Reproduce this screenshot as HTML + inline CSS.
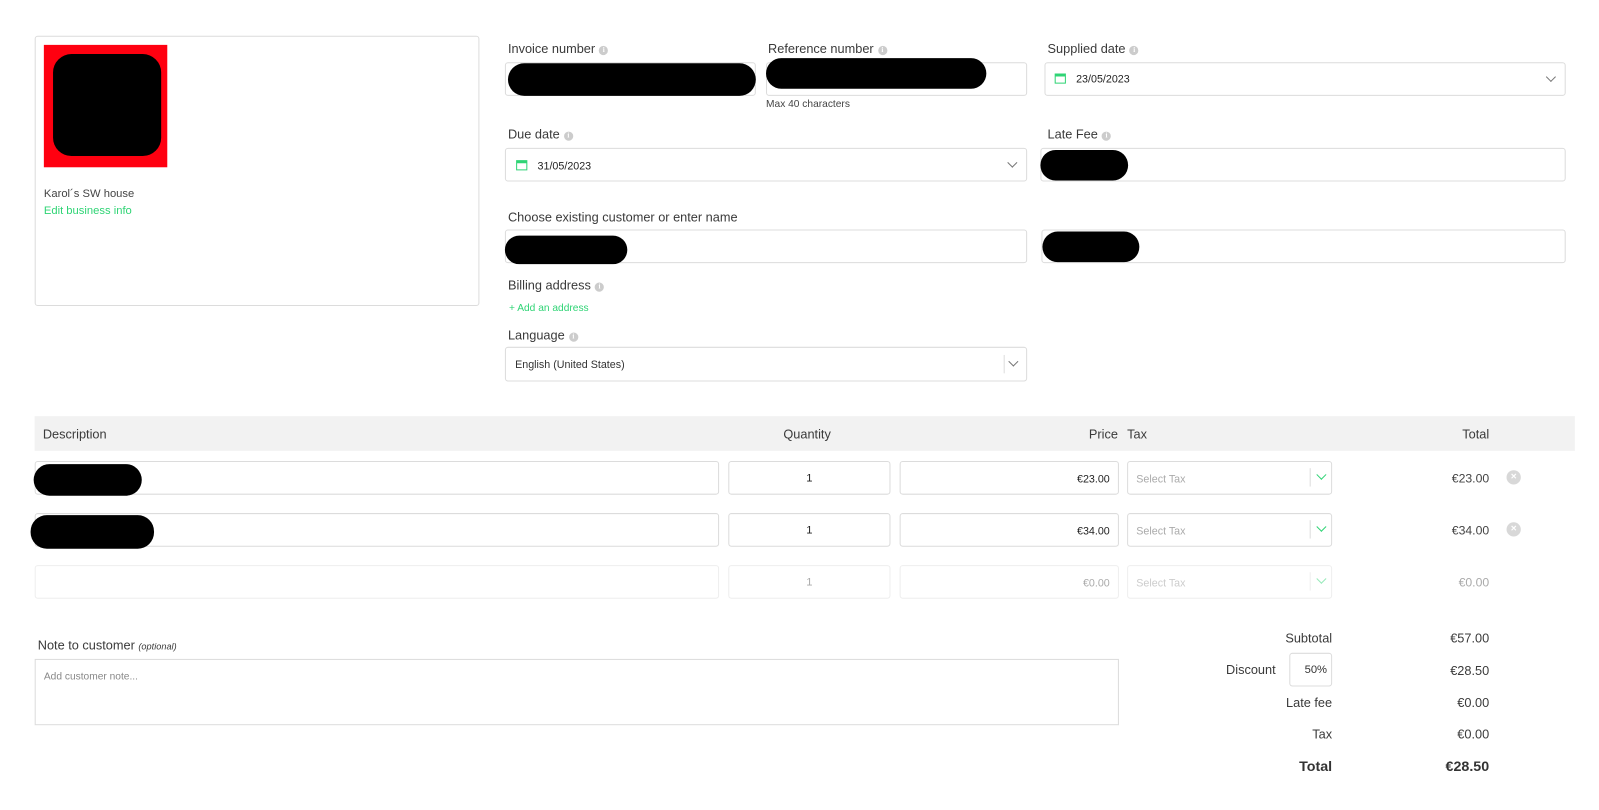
<!DOCTYPE html>
<html><head><meta charset="utf-8"><style>
html,body{margin:0;padding:0;background:#fff;overflow:hidden;width:1599px;height:810px}
#w{position:absolute;left:0;top:0;width:1568px;height:794px;transform:scale(1.02);transform-origin:0 0;font-family:"Liberation Sans",sans-serif;color:#444}
.a{position:absolute}
.box{position:absolute;border:1px solid #dcdcdc;border-radius:3px;background:#fff;box-sizing:border-box}
.lbl{position:absolute;font-size:12.5px;color:#3a3a3a;white-space:nowrap;margin-top:1px}
.i{display:inline-block;width:9px;height:9px;border-radius:50%;background:#ccc;color:#fff;font-size:7px;line-height:9px;text-align:center;font-weight:bold;vertical-align:1px;margin-left:4px;font-family:"Liberation Serif",serif}
.blk{position:absolute;background:#000;border-radius:16px}
.t{position:absolute;font-size:11px;white-space:nowrap;margin-top:1px}
.g{color:#2fd475}
.cal{position:absolute;width:11px;height:10px;border:1.5px solid #2fd475;border-top-width:3px;box-sizing:border-box}
.chev{position:absolute;width:6px;height:6px;border-right:1.3px solid #777;border-bottom:1.3px solid #777;transform:rotate(45deg)}
.gch{border-color:#2fd475}
.r{text-align:right}
.x{position:absolute;width:14px;height:14px;border-radius:50%;background:#d8d8d8;color:#fff;font-size:10px;line-height:14px;text-align:center;font-weight:bold}
.s{font-size:10.5px;margin-top:2px}
</style></head><body><div id="w">
<div class="box" style="left:34px;top:35px;width:436px;height:265px"></div>
<div class="a" style="left:43px;top:44px;width:121px;height:120px;background:#ff0010"></div>
<div class="blk" style="left:52px;top:53px;width:106px;height:100px;border-radius:18px"></div>
<div class="t" style="left:43px;top:183px;color:#444">Karol´s SW house</div>
<div class="t g" style="left:43px;top:200px">Edit business info</div>

<div class="lbl" style="left:498px;top:40px">Invoice number<span class="i">i</span></div>
<div class="box" style="left:495px;top:61px;width:246px;height:33px"></div>
<div class="blk" style="left:498px;top:62px;width:243px;height:32px"></div>
<div class="lbl" style="left:753px;top:40px">Reference number<span class="i">i</span></div>
<div class="box" style="left:751px;top:61px;width:256px;height:33px"></div>
<div class="blk" style="left:751px;top:57px;width:216px;height:30px"></div>
<div class="t" style="left:751px;top:96px;font-size:10px">Max 40 characters</div>
<div class="lbl" style="left:1027px;top:40px">Supplied date<span class="i">i</span></div>
<div class="box" style="left:1024px;top:61px;width:511px;height:33px"></div>
<div class="cal" style="left:1034px;top:72px"></div>
<div class="t s" style="left:1055px;top:70px;color:#222">23/05/2023</div>
<div class="chev" style="left:1517px;top:72px"></div>

<div class="lbl" style="left:498px;top:124px">Due date<span class="i">i</span></div>
<div class="box" style="left:495px;top:145px;width:512px;height:33px"></div>
<div class="cal" style="left:506px;top:157px"></div>
<div class="t s" style="left:527px;top:155px;color:#222">31/05/2023</div>
<div class="chev" style="left:989px;top:156px"></div>
<div class="lbl" style="left:1027px;top:124px">Late Fee<span class="i">i</span></div>
<div class="box" style="left:1020px;top:145px;width:515px;height:33px"></div>
<div class="blk" style="left:1020px;top:147px;width:86px;height:30px"></div>

<div class="lbl" style="left:498px;top:205px">Choose existing customer or enter name</div>
<div class="box" style="left:495px;top:225px;width:512px;height:33px"></div>
<div class="blk" style="left:495px;top:231px;width:120px;height:28px"></div>
<div class="box" style="left:1021px;top:225px;width:514px;height:33px"></div>
<div class="blk" style="left:1022px;top:227px;width:95px;height:30px"></div>
<div class="lbl" style="left:498px;top:272px">Billing address<span class="i">i</span></div>
<div class="t g" style="left:499px;top:296px;font-size:10px">+ Add an address</div>
<div class="lbl" style="left:498px;top:321px">Language<span class="i">i</span></div>
<div class="box" style="left:495px;top:340px;width:512px;height:34px"></div>
<div class="t s" style="left:505px;top:350px;color:#333">English (United States)</div>
<div class="a" style="left:984px;top:348px;width:1px;height:18px;background:#ddd"></div>
<div class="chev" style="left:990px;top:351px"></div>

<div class="a" style="left:34px;top:408px;width:1510px;height:34px;background:#f2f2f2"></div>
<div class="lbl" style="left:42px;top:418px">Description</div>
<div class="lbl" style="left:768px;top:418px">Quantity</div>
<div class="lbl r" style="left:1000px;top:418px;width:96px">Price</div>
<div class="lbl" style="left:1105px;top:418px">Tax</div>
<div class="lbl r" style="left:1360px;top:418px;width:100px">Total</div>

<div class="box" style="left:34px;top:452px;width:671px;height:33px"></div>
<div class="blk" style="left:33px;top:455px;width:106px;height:31px"></div>
<div class="box" style="left:714px;top:452px;width:159px;height:33px"></div>
<div class="t" style="left:714px;top:462px;width:159px;text-align:center;color:#222">1</div>
<div class="box" style="left:882px;top:452px;width:215px;height:33px"></div>
<div class="t r s" style="left:882px;top:462px;width:206px;color:#222">€23.00</div>
<div class="box" style="left:1105px;top:452px;width:201px;height:33px"></div>
<div class="t s" style="left:1114px;top:462px;color:#aaa">Select Tax</div>
<div class="a" style="left:1284px;top:459px;width:1px;height:18px;background:#ddd"></div>
<div class="chev gch" style="left:1292px;top:462px"></div>
<div class="t r" style="left:1360px;top:461px;width:100px;font-size:12px">€23.00</div>
<div class="x" style="left:1477px;top:461px">×</div>

<div class="box" style="left:34px;top:503px;width:671px;height:33px"></div>
<div class="blk" style="left:30px;top:505px;width:121px;height:33px"></div>
<div class="box" style="left:714px;top:503px;width:159px;height:33px"></div>
<div class="t" style="left:714px;top:513px;width:159px;text-align:center;color:#222">1</div>
<div class="box" style="left:882px;top:503px;width:215px;height:33px"></div>
<div class="t r s" style="left:882px;top:513px;width:206px;color:#222">€34.00</div>
<div class="box" style="left:1105px;top:503px;width:201px;height:33px"></div>
<div class="t s" style="left:1114px;top:513px;color:#aaa">Select Tax</div>
<div class="a" style="left:1284px;top:510px;width:1px;height:18px;background:#ddd"></div>
<div class="chev gch" style="left:1292px;top:513px"></div>
<div class="t r" style="left:1360px;top:512px;width:100px;font-size:12px">€34.00</div>
<div class="x" style="left:1477px;top:512px">×</div>

<div class="box" style="left:34px;top:554px;width:671px;height:33px;border-color:#eee"></div>
<div class="box" style="left:714px;top:554px;width:159px;height:33px;border-color:#eee"></div>
<div class="t" style="left:714px;top:564px;width:159px;text-align:center;color:#aaa">1</div>
<div class="box" style="left:882px;top:554px;width:215px;height:33px;border-color:#eee"></div>
<div class="t r s" style="left:882px;top:564px;width:206px;color:#aaa">€0.00</div>
<div class="box" style="left:1105px;top:554px;width:201px;height:33px;border-color:#eee"></div>
<div class="t s" style="left:1114px;top:564px;color:#ccc">Select Tax</div>
<div class="a" style="left:1284px;top:561px;width:1px;height:18px;background:#eee"></div>
<div class="chev gch" style="left:1292px;top:564px;opacity:.5"></div>
<div class="t r" style="left:1360px;top:563px;width:100px;font-size:12px;color:#aaa">€0.00</div>

<div class="lbl" style="left:37px;top:625px">Note to customer <i style="font-size:9px">(optional)</i></div>
<div class="box" style="left:34px;top:646px;width:1063px;height:65px;border-radius:0"></div>
<div class="t" style="left:43px;top:657px;color:#888;font-size:10px">Add customer note...</div>

<div class="lbl r" style="left:1200px;top:618px;width:106px">Subtotal</div>
<div class="lbl r" style="left:1360px;top:618px;width:100px">€57.00</div>
<div class="lbl" style="left:1202px;top:649px">Discount</div>
<div class="box" style="left:1264px;top:640px;width:42px;height:33px"></div>
<div class="t" style="left:1279px;top:650px;color:#333">50%</div>
<div class="lbl r" style="left:1360px;top:650px;width:100px">€28.50</div>
<div class="lbl r" style="left:1200px;top:681px;width:106px">Late fee</div>
<div class="lbl r" style="left:1360px;top:681px;width:100px">€0.00</div>
<div class="lbl r" style="left:1200px;top:712px;width:106px">Tax</div>
<div class="lbl r" style="left:1360px;top:712px;width:100px">€0.00</div>
<div class="lbl r" style="left:1200px;top:742px;width:106px;font-size:14px;font-weight:bold;color:#333">Total</div>
<div class="lbl r" style="left:1360px;top:742px;width:100px;font-size:14px;font-weight:bold;color:#333">€28.50</div>
</div></body></html>
